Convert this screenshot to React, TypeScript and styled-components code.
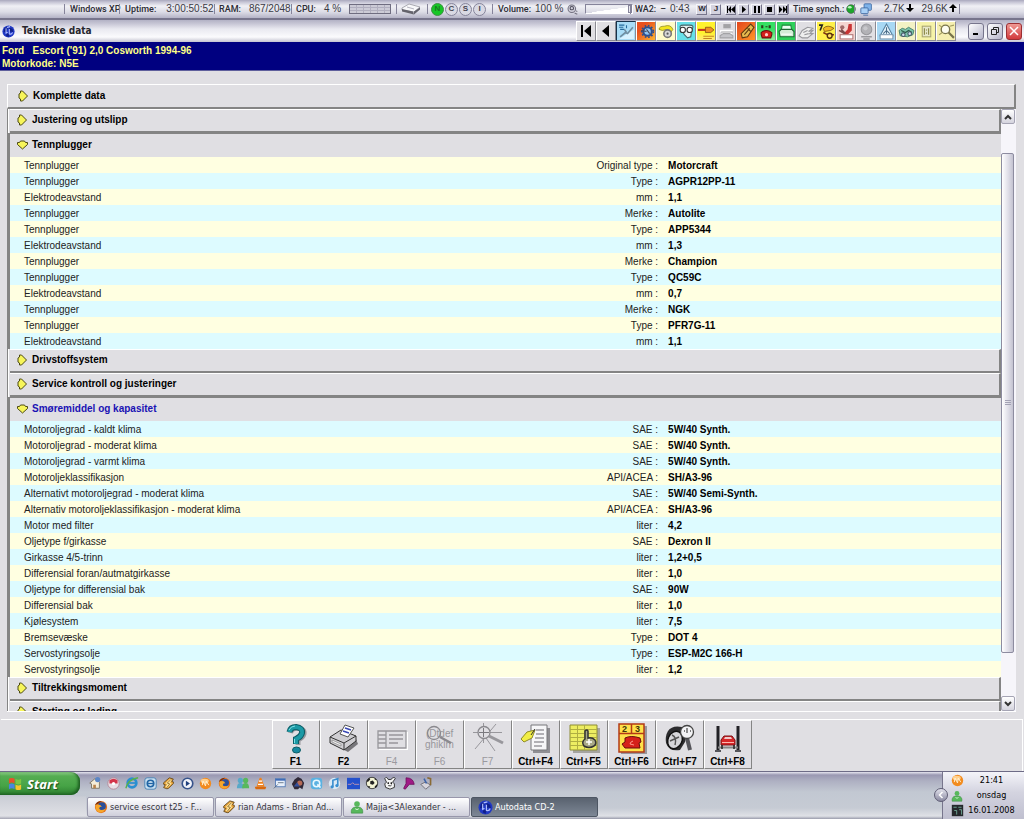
import React, { useState } from "react";
import styled, { createGlobalStyle, css } from "styled-components";

const SANS = '"Liberation Sans", Arial, sans-serif';
const TAHOMA = '"DejaVu Sans Condensed", "DejaVu Sans", sans-serif';
const FACE = "#e0dfe3";
const SHADE = "#848484";

const Global = createGlobalStyle`
  *, *::before, *::after { box-sizing: border-box; }
  html, body, #root { height: 100%; }
  body { margin: 0; background: ${FACE}; font: 10px/16px ${SANS}; color: #000; }
  button { font: inherit; color: inherit; margin: 0; padding: 0; border: 0; background: none; }
  svg { display: block; flex: none; }
`;

const Desktop = styled.div`
  display: flex;
  flex-direction: column;
  height: 100vh;
  min-height: 400px;
  overflow: hidden;
`;

/* ---------- system monitor strip ---------- */

const Monitor = styled.div`
  flex: none;
  display: grid;
  grid-template-columns: 55px 95px 77px 105px 31px 65px 138px 158px 66px 105px 1fr;
  align-items: center;
  height: 20px;
  padding-left: 64px;
  background: linear-gradient(#a9a8bd 0, #c5c4d4 2px, #f0f0f5 6px, #dcdce6 12px, #b4b3c6 18px);
  border-bottom: 2px solid #77758c;
  font: 500 9px/12px Roboto, sans-serif;
  white-space: nowrap;
`;

const Gauge = styled.div<{ $gap?: number; $pad?: number }>`
  display: flex;
  align-items: center;
  justify-content: flex-start;
  gap: ${(p) => p.$gap ?? 0}px;
  height: 10px;
  padding-left: ${(p) => p.$pad ?? 5}px;
  border-left: 1px solid #85839a;
  color: #2c2c34;
`;

const Digits = styled.span`
  font: 10px/12px ${SANS};
  color: #3a3a44;
`;

const Dot = styled.span<{ $on?: boolean }>`
  display: grid;
  place-items: center;
  width: 13px;
  height: 13px;
  border: 1px solid ${(p) => (p.$on ? "#3f8f46" : "#85839a")};
  border-radius: 50%;
  background: ${(p) => (p.$on ? "#17c626" : "#d9d9e3")};
  font: bold 8px/8px ${SANS};
  color: ${(p) => (p.$on ? "#1a7a22" : "#44434f")};
`;

const Volume = styled.input`
  appearance: none;
  width: 48px;
  height: 10px;
  margin: 0 0 0 3px;
  border: 1px solid #85839a;
  border-right-color: #fff;
  border-bottom-color: #fff;
  background: linear-gradient(172deg, transparent 50%, #fff 52%) 6px 1px / 36px 7px no-repeat;
  &::-webkit-slider-thumb {
    appearance: none;
    width: 4px;
    height: 8px;
    background: #e8e8ee;
    border: 1px solid #85839a;
  }
`;

const Tiny = styled.button`
  display: grid;
  place-items: center;
  width: 11px;
  height: 11px;
  border: 1px solid #f6f6fa;
  border-right-color: #77758c;
  border-bottom-color: #77758c;
  background: #d4d3df;
  font: bold 8px/8px ${SANS};
`;

const TinyGroup = styled.span<{ $gap: number; $left: number }>`
  display: flex;
  gap: ${(p) => p.$gap}px;
  margin-left: ${(p) => p.$left}px;
`;

/* ---------- window caption ---------- */

const Caption = styled.header`
  flex: none;
  display: flex;
  align-items: center;
  height: 22px;
  padding: 0 2px;
  background: linear-gradient(#b3b2c5 0, #c3c2d2 3px, #e9e9f0 9px, #fbfbfd 17px, #c4c3d0 22px);
`;

const Title = styled.h1`
  flex: 1;
  margin: 0;
  padding-left: 7px;
  font: bold 10px/20px "DejaVu Sans Condensed", sans-serif;
  color: #26262e;
`;

const IconStrip = styled.div`
  display: flex;
  height: 20px;
  background: #fff;
`;

const StripButton = styled.button<{ $bg?: string; $pressed?: boolean }>`
  display: grid;
  place-items: center;
  width: 20px;
  height: 20px;
  border: 1px solid ${(p) => (p.$pressed ? "#17324a" : "#fff")};
  border-right-color: #8a8a92;
  border-bottom-color: #8a8a92;
  background: ${(p) => p.$bg ?? FACE};
`;

const WindowButtons = styled.div`
  display: flex;
  gap: 3px;
  margin-left: 12px;
`;

const WindowButton = styled.button<{ $close?: boolean }>`
  display: grid;
  place-items: center;
  width: 16px;
  height: 17px;
  border: 1px solid ${(p) => (p.$close ? "#9c2f33" : "#77758c")};
  border-radius: 3px;
  background: ${(p) =>
    p.$close ? "linear-gradient(#f09a94, #d23a3c)" : "linear-gradient(135deg, #fff, #b5b4c9)"};
`;

const Vehicle = styled.div`
  flex: none;
  height: 29px;
  padding: 2px;
  background: #000080;
  border-bottom: 1px solid #5f5f9c;
  color: #ffff86;
  font: bold 10px/13px ${SANS};
  white-space: pre;
`;

/* ---------- content ---------- */

const Content = styled.main`
  flex: 1;
  min-height: 0;
  display: flex;
  flex-direction: column;
  margin: 13px 8px 0 7px;
  border-bottom: 1px solid #fff;
`;

const headerLook = css`
  display: flex;
  align-items: center;
  gap: 4px;
  width: 100%;
  font: bold 10px/20px ${SANS};
  text-align: left;
`;

const AllData = styled.button`
  ${headerLook}
  flex: none;
  height: 25px;
  padding-left: 9px;
  border: 1px solid #fff;
  border-right: 2px solid ${SHADE};
  border-bottom: 2px solid ${SHADE};
`;

const Scroller = styled.div`
  flex: 1;
  min-height: 0;
  display: flex;
  border-left: 1px solid ${SHADE};
`;

const Sections = styled.div`
  flex: 1;
  min-width: 0;
  overflow-y: auto;
  scrollbar-width: none;
`;

const Section = styled.section<{ $open: boolean }>`
  border-left: ${(p) => (p.$open ? `2px solid ${SHADE}` : "1px solid #fff")};
  padding-left: ${(p) => (p.$open ? 0 : 1)}px;
`;

const SectionHeader = styled.button<{ $open: boolean; $current?: boolean }>`
  ${headerLook}
  height: 24px;
  padding: 0 0 2px 6px;
  color: ${(p) => (p.$current ? "#1a12b4" : "#000")};
  border-top: 1px solid ${(p) => (p.$open ? SHADE : "#fff")};
  border-right: ${(p) => (p.$open ? 0 : 2)}px solid ${SHADE};
  border-bottom: ${(p) => (p.$open ? 0 : 2)}px solid ${SHADE};
`;

const Sheet = styled.table`
  width: 100%;
  table-layout: fixed;
  border-collapse: collapse;
  border-spacing: 0;
`;

const Row = styled.tr<{ $tint: boolean }>`
  height: 16px;
  background: ${(p) => (p.$tint ? "#ddfbff" : "#ffffe1")};
`;

const Name = styled.th`
  width: 54%;
  padding: 2px 0 0 14px;
  font-weight: normal;
  text-align: left;
  line-height: 14px;
  color: #222;
`;

const Unit = styled.td`
  padding: 2px 1px 0 0;
  text-align: right;
  line-height: 14px;
  color: #222;
`;

const Value = styled.td`
  width: 34.5%;
  padding: 2px 0 0 9px;
  font-weight: bold;
  line-height: 14px;
`;

const ScrollBar = styled.div`
  flex: none;
  display: flex;
  flex-direction: column;
  width: 15px;
  background: #f6f5fa;
`;

const ScrollButton = styled.button`
  display: grid;
  place-items: center;
  flex: none;
  width: 14px;
  height: 15px;
  border: 1px solid #a5a4b4;
  border-radius: 2px;
  background: linear-gradient(#fff, #d5d4de);
`;

const Track = styled.div`
  flex: 1;
  display: grid;
  grid-template-rows: 29fr 501fr 43fr;
`;

const Thumb = styled.div`
  grid-row: 2;
  display: grid;
  place-items: center;
  width: 13px;
  border: 1px solid #8d8ca0;
  border-radius: 2px;
  background: linear-gradient(90deg, #fff, #dddce6 60%, #c3c2d0);
`;

/* ---------- function keys ---------- */

const KeyBar = styled.div`
  flex: none;
  display: flex;
  justify-content: center;
  height: 52px;
  margin: 7px 1px 0 1px;
  border-top: 1px solid #fff;
  border-right: 1px solid #fff;
`;

const KeyButton = styled.button`
  display: flex;
  flex-direction: column;
  align-items: center;
  gap: 1px;
  width: 48px;
  height: 49px;
  padding-top: 2px;
  border: 1px solid #fff;
  border-right-color: ${SHADE};
  border-bottom-color: ${SHADE};
  font: bold 10px/12px ${SANS};
  &:disabled {
    color: #9a999e;
    font-weight: normal;
  }
`;

/* ---------- task bar ---------- */

const TaskBar = styled.footer`
  flex: none;
  display: grid;
  grid-template-columns: 86px 1fr 82px;
  height: 48px;
  border-top: 1px solid #6d6b86;
  background: linear-gradient(#e6e5f0 0, #9a98b2 3px, #aeb0c2 9px, #c2c8d2 20px, #c6cbd4 36px, #dfe1e6 44px, #9a9cac 47px);
`;

const StartCell = styled.div`
  background: linear-gradient(transparent 24px, #cbced6 25px, #e0e1e6 44px, #a2a3b2 47px);
`;

const Start = styled.button`
  display: flex;
  align-items: center;
  gap: 4px;
  width: 80px;
  height: 23px;
  padding-left: 8px;
  border-radius: 0 9px 9px 0;
  background: linear-gradient(#8fce88 0, #55ad52 4px, #46a346 14px, #2c7d2e 23px);
  box-shadow: inset -2px -1px 3px #1c5c20;
  color: #fff;
  font: italic bold 13px/20px "Open Sans", sans-serif;
  text-shadow: 1px 1px 1px #1c4f1e;
`;

const TaskColumn = styled.div`
  display: flex;
  flex-direction: column;
  gap: 3px;
`;

const QuickLaunch = styled.nav`
  display: grid;
  grid-template-columns: repeat(19, 1fr);
  width: 350px;
  height: 22px;
`;

const Quick = styled.button`
  display: grid;
  place-items: center;
`;

const Tasks = styled.div`
  display: flex;
  gap: 1px;
  padding-left: 1px;
`;

const Task = styled.button<{ $active?: boolean }>`
  display: flex;
  align-items: center;
  gap: 2px;
  flex: 0 1 127px;
  height: 20px;
  padding-left: 6px;
  border: 1px solid ${(p) => (p.$active ? "#4d5663" : "#9897ab")};
  border-radius: 2px;
  background: ${(p) =>
    p.$active ? "linear-gradient(#59626f, #7d8795)" : "linear-gradient(#fff 0, #e9e9ef 8px, #cfcfdb 18px)"};
  color: ${(p) => (p.$active ? "#fff" : "#33333b")};
  font: 9px/14px ${TAHOMA};
  white-space: nowrap;
`;

const Tray = styled.div`
  position: relative;
  display: grid;
  grid-template-columns: 14px 1fr;
  grid-auto-rows: 15px;
  align-items: center;
  column-gap: 2px;
  padding: 1px 8px 0 8px;
  border-left: 1px solid #77758c;
  background: linear-gradient(#f4f4f9, #d4d4e0 20px, #c0c0d0 46px);
  font: 9px/15px ${TAHOMA};
  text-align: center;
`;

const TrayToggle = styled.button`
  position: absolute;
  left: -9px;
  top: 16px;
  display: grid;
  place-items: center;
  width: 14px;
  height: 14px;
  border: 1px solid #5f5d75;
  border-radius: 50%;
  background: linear-gradient(#e2e2ec, #8b8aa2);
`;

/* ---------- drawings ---------- */

const Art = ({ s = 16, w, h, box = 16, children }: any) => (
  <svg width={w ?? s} height={h ?? s} viewBox={`0 0 ${w && h ? `${w} ${h}` : `${box} ${box}`}`} aria-hidden="true">
    {children}
  </svg>
);

const Arrow = ({ open }: { open: boolean }) => (
  <Art w={12} h={12}>
    <path
      d={open ? "M3.5 3.5L4.500 2h4l1 1.500h2v2L6.500 10 1.500 5.500v-2z" : "M3.500 3V1h2L10.500 6 5.500 11h-2V9L2 8V4z"}
      fill="#f7f55a"
      stroke="#4c4a12"
    />
  </Art>
);

const Autodata = ({ s = 14 }) => (
  <Art s={s}>
    <circle cx="8" cy="8" r="7.500" fill="#2038c4" />
    <path d="M3 4l3-2 1 3-2 3-3 1zM9 3l4 2 1 4-3-1-2 1zM6 10l3 1-1 4-3-2z" fill="#10208a" />
    <path d="M5 4v6l2-1M9 5v6q3 1 4-2M6 3l4-1" stroke="#aebcff" fill="none" strokeWidth="1.300" />
  </Art>
);

const Firefox = ({ s = 13 }) => (
  <Art s={s}>
    <circle cx="8" cy="8" r="7" fill="#e5741b" />
    <circle cx="9" cy="7" r="4.500" fill="#2b4f9a" />
    <path d="M2 4q1 2 3 1 3 0 4 3-3-1-3 2 2 3 7 0-2 5-7 4Q1 13 2 4z" fill="#f7a72b" />
    <path d="M1 6Q3 1 9 1l-4 3z" fill="#7a2d0c" />
  </Art>
);

const Winamp = ({ s = 13 }) => (
  <Art s={s}>
    <path d="M9 1L2 7v2l2 .5L2 13l4 1.500L8 14l6-6V6l-2-.5L14 2.500z" fill="#e8a33a" stroke="#5c4217" />
    <path d="M10 2.500L4 8l2.500 1L4 12.500l3 .5 5-5-2-1 2-3.500z" fill="#fbe6a1" />
    <path d="M11 3L6.500 7.500l3 1L6 13" fill="none" stroke="#8c6420" />
  </Art>
);

const Buddy = ({ s = 13, c = "#58b85c" }) => (
  <Art s={s}>
    <circle cx="8" cy="4.500" r="3.200" fill={c} />
    <path d="M1.500 15q-1-6 4.500-7h4q5.500 1 4.500 7z" fill={c} stroke="#34803c" strokeWidth=".6" />
    <path d="M6 10q2 2 4 0" stroke="#e8ffe8" fill="none" />
  </Art>
);

const Ball = ({ s = 13 }) => (
  <Art s={s}>
    <circle cx="8" cy="8" r="7" fill="#f28b1e" />
    <ellipse cx="7" cy="5" rx="5" ry="3" fill="#ffcf8c" />
    <path d="M4 10l1-5 3 6 1-6 3 5" stroke="#fff0d0" fill="none" strokeWidth="1.200" />
  </Art>
);

const Drive = () => (
  <Art w={20} h={12}>
    <path d="M1 5L8 1l11 3-6 5L1 7z" fill="#f8f8fa" stroke="#8a8994" strokeWidth=".7" />
    <path d="M1 6l11 2.500 1 3L1 8.500zM13 8.500l6-4v2l-6 5z" fill="#64636c" />
    <path d="M6 4l7 2" stroke="#b5b4be" />
  </Art>
);

const Meter = () => (
  <Art w={42} h={10}>
    <rect x=".5" y=".5" width="41" height="9" fill="#cccbd6" stroke="#6f6d80" />
    <path d="M1 3.500h40M1 6.500h40M7.500 1v8M14.500 1v8M21.500 1v8M28.500 1v8M35.500 1v8" stroke="#b1afbf" />
  </Art>
);

const Speaker = () => (
  <Art s={11}>
    <circle cx="7" cy="7" r="5.500" fill="#d0cfdb" stroke="#72707f" strokeWidth="1.500" />
    <circle cx="7" cy="6" r="2.500" fill="none" stroke="#4e4c5a" strokeWidth="1.500" />
    <path d="M11 13l4 2M13 10l2 1" stroke="#72707f" strokeWidth="1.500" />
  </Art>
);

const media: Record<string, string> = {
  Previous: "M0 0h1v7H0zM4 0v7L1 3.500zM8 0v7L4 3.500z",
  Play: "M2 0l4 3.500L2 7z",
  Pause: "M1 0h2v7H1zM5 0h2v7H5z",
  Stop: "M1 1h5v5H1z",
  Next: "M0 0l3.500 3.500L0 7zM4 0l3.500 3.500L4 7zM7 0h1v7H7z",
};

const stripIcons: { name: string; bg: string; art: React.ReactNode }[] = [
  {
    name: "Tekniske data",
    bg: "#a9dcf6",
    art: (
      <>
        <path d="M1 15L15 6v9z" fill="#d9f2ff" />
        <path d="M1 2h5M1 4h4M2 6h4M8 2v3" stroke="#256a9c" />
        <path d="M2 13l5-4 2 1 5-6M8 9l-2-3" stroke="#6f8da0" fill="none" strokeWidth="1.500" />
      </>
    ),
  },
  {
    name: "Motorstyring",
    bg: "linear-gradient(135deg,#e8501e 30%,#ffb62e)",
    art: (
      <>
        <circle cx="9" cy="8" r="4" fill="#8fc3f0" stroke="#2c4f8d" strokeWidth="2" />
        <circle cx="9" cy="8" r="5.500" fill="none" stroke="#2c4f8d" strokeWidth="1.500" strokeDasharray="1.500 1.700" />
        <path d="M3 7l5 1M8 6l3 4" stroke="#445" />
      </>
    ),
  },
  {
    name: "Registerrem",
    bg: "#fffbc8",
    art: (
      <>
        <path d="M1 6q0-3 5-3 6-2 8 3l-2 3-3-3-5 1z" fill="#f2e51d" stroke="#8a831e" strokeWidth=".7" />
        <circle cx="9" cy="10" r="3.500" fill="#d8d8d8" stroke="#777" strokeWidth="1.500" />
        <circle cx="9" cy="10" r="1" fill="#555" />
      </>
    ),
  },
  {
    name: "Diagnose",
    bg: "#66e0e8",
    art: (
      <>
        <path d="M3 6q-3-4 2-4h6q5 0 2 4l-1 7-3 1-3-3z" fill="#e8f4f4" stroke="#47666a" />
        <circle cx="4.500" cy="6.500" r="2.500" fill="#fff" stroke="#333" />
        <circle cx="11" cy="6.500" r="2.500" fill="#fff" stroke="#333" />
      </>
    ),
  },
  {
    name: "Reparasjonstider",
    bg: "linear-gradient(#fff22e 60%,#ffe97a)",
    art: (
      <>
        <path d="M0 6.500h7" stroke="#c8361f" strokeWidth="2" />
        <path d="M7 4h5l3 2.500L12 9H7z" fill="#f09024" stroke="#7e4a10" strokeWidth=".7" />
        <path d="M5 12.500h10M5 14.500h8" stroke="#c58324" />
      </>
    ),
  },
  {
    name: "Luftkondisjonering",
    bg: FACE,
    art: (
      <>
        <rect x="5" y="1" width="7" height="4" fill="#a3a3a6" />
        <path d="M2 7.500h12M4 9.500h9" stroke="#fff" strokeWidth="2" />
        <path d="M3 8.500h11M2 12l3-2h6l3 2v2H2z" stroke="#a3a3a6" fill="#c4c4c8" />
      </>
    ),
  },
  {
    name: "Service",
    bg: "linear-gradient(135deg,#e3461e,#ff9726)",
    art: (
      <>
        <path d="M12 1l3 3-6 9-5 1-1-4z" fill="#e6b94e" stroke="#5e3a12" />
        <path d="M11 5L6 11M9 5l3 3" stroke="#5e3a12" />
      </>
    ),
  },
  {
    name: "Feilkoder",
    bg: "linear-gradient(#35e063 40%,#8ff09c)",
    art: (
      <>
        <path d="M4 2v3M11 2v3M8 3v1" stroke="#2c3a1a" strokeWidth="2" />
        <path d="M3 9q5-4 10 0v2l-1 3H4l-1-3z" fill="#d3201c" stroke="#6c1010" />
        <circle cx="8" cy="11" r="1.500" fill="#ffd0c8" />
      </>
    ),
  },
  {
    name: "Utskrift",
    bg: "#2fd15b",
    art: (
      <>
        <path d="M4 2h8l1 5H3z" fill="#eafff0" stroke="#1e8a3c" />
        <path d="M1 8l2-2h10l2 2v5H2z" fill="#d2ecd6" stroke="#1e6a34" />
        <path d="M3 10.500h10" stroke="#fff" />
      </>
    ),
  },
  {
    name: "Koblingsskjema",
    bg: FACE,
    art: (
      <>
        <path d="M1 12l3-5 5-3 5 1-4 3 4-1-3 3 3 0-5 4H4z" fill="#eee" stroke="#98989c" />
        <path d="M5 9l4-2M6 11l4-1" stroke="#98989c" />
      </>
    ),
  },
  {
    name: "Nøkkelprogrammering",
    bg: "#fff04a",
    art: (
      <>
        <path d="M1 2h3l-2 5" stroke="#222" fill="none" strokeWidth="1.500" />
        <path d="M5 5q4-4 10 0l-3 2-6 1z" fill="#f2b822" stroke="#6f4b0d" strokeWidth=".7" />
        <path d="M5 9l4 2h6" stroke="#7c3414" strokeWidth="1.500" fill="none" />
        <circle cx="11" cy="12" r="2.300" fill="#ffdf5d" stroke="#58340e" strokeWidth="1.300" />
      </>
    ),
  },
  {
    name: "Airbag",
    bg: "#f4d4d0",
    art: (
      <>
        <path d="M10 1h3v6l-4 4-4-1 4-4z" fill="#c93434" />
        <circle cx="4" cy="4" r="2" fill="#a06a6a" />
        <path d="M1 7l5 3M3 6l4 4" stroke="#7a4a4a" strokeWidth="1.500" />
        <rect x="2" y="11" width="12" height="4" fill="#fff" stroke="#b07474" />
      </>
    ),
  },
  {
    name: "Dekktrykk",
    bg: FACE,
    art: (
      <>
        <circle cx="8" cy="6" r="5" fill="#b2b2b6" stroke="#98989c" />
        <circle cx="7" cy="5" r="2" fill="#c8c8cc" />
        <path d="M3 13h10M5 15h6" stroke="#99999d" strokeWidth="1.500" />
      </>
    ),
  },
  {
    name: "Hjulinnstilling",
    bg: "#a8d8f4",
    art: (
      <>
        <path d="M8 1L2 12h12z" fill="#e6f4fc" stroke="#5480a0" />
        <path d="M8 4v6M5 10l3-3 3 3" stroke="#4a6c88" fill="none" />
        <rect x="2" y="11" width="12" height="4" fill="#fff" stroke="#7a98b0" />
      </>
    ),
  },
  {
    name: "Kjøretøy",
    bg: "#f3f2c4",
    art: (
      <>
        <path d="M1 7l3-2 3 1 3-2 5 3-1 4-5 2-7-1z" fill="#7cc4aa" stroke="#3d7664" strokeWidth=".8" />
        <path d="M3 7l4 2 3-2 3 2" fill="none" stroke="#2d5a4a" />
        <circle cx="5" cy="11" r="1.700" fill="#cde" stroke="#456" />
        <circle cx="11" cy="10" r="1.700" fill="#cde" stroke="#456" />
      </>
    ),
  },
  {
    name: "Sikringer",
    bg: "#f6f3a8",
    art: (
      <>
        <rect x="4" y="3" width="8" height="10" fill="#e6e6c8" stroke="#a9a670" />
        <path d="M6 5v6M10 5v6M8 6v1M8 9v1" stroke="#84813e" />
      </>
    ),
  },
  {
    name: "Søk",
    bg: "#f5efb0",
    art: (
      <>
        <circle cx="7" cy="6" r="4" fill="#fdfdf0" stroke="#77734a" strokeWidth="1.300" />
        <path d="M10 9l5 5" stroke="#77734a" strokeWidth="2" />
        <path d="M1 11l3-2M11 3l4-1M1 2l3 2" stroke="#a59f60" />
      </>
    ),
  },
];

const keys: { label: string; off?: boolean; art: React.ReactNode }[] = [
  {
    label: "F1",
    art: (
      <>
        <path d="M10.500 10q1-5 7.500-5 7 1 6 6-1 4-6 6v5" fill="none" stroke="#9c9ca0" strokeWidth="5" />
        <path d="M9.500 9q1-5 6.500-5 7 1 6 6-1 4-6 6v5" fill="none" stroke="#0d5d66" strokeWidth="6" />
        <path d="M9.500 9q1-5 6.500-5 7 1 6 6-1 4-6 6v5" fill="none" stroke="#1c9aa6" strokeWidth="4" />
        <path d="M9 7q2-4 6-4M14.500 16v4" fill="none" stroke="#7fe0e6" />
        <ellipse cx="16.500" cy="27" rx="4" ry="3" fill="#1689a0" stroke="#0d5d66" />
      </>
    ),
  },
  {
    label: "F2",
    art: (
      <>
        <path d="M5 21l15 8 10-8-2-5-12 3z" fill="#77767a" />
        <path d="M2 14l11-7 15 6v5l-12 9L2 20z" fill="#cfced2" stroke="#333" />
        <path d="M2 14l14 6 12-7M16 20v7" fill="none" stroke="#333" />
        <path d="M12 11l5-9 9 3-6 9z" fill="#fff" stroke="#555" />
        <path d="M17 5l6 2M15 8l6 2" stroke="#3746b4" strokeWidth="1.500" />
        <path d="M4 17l9 4v2l-9-4z" fill="#f4f4f4" stroke="#777" strokeWidth=".6" />
      </>
    ),
  },
  {
    label: "F4",
    off: true,
    art: (
      <>
        <path d="M3 26h28V9" fill="none" stroke="#fff" strokeWidth="2" />
        <path d="M2 8h28v17H2zM10 8v17M2 12h8M2 16h8M2 20h8" fill="none" stroke="#98979c" strokeWidth="1.300" />
        <path d="M13 12h14M13 16h14M13 20h9" stroke="#98979c" strokeWidth="1.500" />
      </>
    ),
  },
  {
    label: "F6",
    off: true,
    art: (
      <>
        <text x="2" y="14" fontSize="10" fill="#98979c" fontFamily="Liberation Sans, sans-serif">(Dtdef</text>
        <text x="1" y="25" fontSize="10" fill="#98979c" fontFamily="Liberation Sans, sans-serif">ghiklm</text>
        <circle cx="10" cy="10" r="6.500" fill="none" stroke="#8a898e" strokeWidth="1.300" />
        <path d="M16 14l11 6" stroke="#8a898e" strokeWidth="2.500" />
      </>
    ),
  },
  {
    label: "F7",
    off: true,
    art: (
      <>
        <path d="M1 9.500h29M11.500 0v20M3 26L24 1M14 15l9 13" stroke="#98979c" />
        <circle cx="12" cy="9.500" r="6" fill={FACE} stroke="#8a898e" strokeWidth="1.300" />
        <path d="M11.500 5v9M7 9.500h10" stroke="#7a797e" />
        <path d="M17 13l14 7" stroke="#98979c" strokeWidth="3" />
      </>
    ),
  },
  {
    label: "Ctrl+F4",
    art: (
      <>
        <path d="M13 5h17v25H13z" fill="#8f8e93" />
        <path d="M11 2h16v25H11z" fill="#f6f6f8" stroke="#77767a" />
        <path d="M16 7h8M16 11h8M15 15h9M14 19h10M14 23h8" stroke="#9a999e" strokeWidth="1.500" />
        <path d="M1 16l6-7 8-2-3 8-8 4z" fill="#f1ee45" stroke="#8f8b26" />
        <path d="M11 12l4-6" stroke="#333" />
      </>
    ),
  },
  {
    label: "Ctrl+F5",
    art: (
      <>
        <path d="M5 5h27v25H5z" fill="#a5a4a0" />
        <path d="M2 2h27v25H2z" fill="#eded62" stroke="#8c8b35" />
        <path d="M2 6.500h27M2 10.500h27M2 14.500h27M2 18.500h27M2 22.500h27M9.500 2v25M16.500 2v25" stroke="#b0ae42" />
        <path d="M17 8q2-2 3 0v7q4-1 7 2 2 4-1 6-5 3-10 0-3-4 1-7z" fill="#a9a987" stroke="#333" strokeWidth="1.500" />
        <path d="M21 16v6M18 19h6" stroke="#fff" strokeWidth="1.500" />
      </>
    ),
  },
  {
    label: "Ctrl+F6",
    art: (
      <>
        <path d="M5 3h26v28H5z" fill="#98979c" />
        <path d="M3 1h25v28H3z" fill="#ffe14a" stroke="#b33a16" strokeWidth="1.500" />
        <path d="M15.500 1v10M3 10.500h25" stroke="#b33a16" strokeWidth="1.500" />
        <text x="6" y="9" fontSize="9" fill="#40350a" fontFamily="Liberation Sans, sans-serif">2</text>
        <text x="19" y="9" fontSize="9" fill="#40350a" fontFamily="Liberation Sans, sans-serif">3</text>
        <path d="M9 15q6-3 15 0l1 4-2 1 1 5H9l-3-4 3-2z" fill="#d5211a" stroke="#6a0c0c" />
        <path d="M17 18q-3 1-3 3l4 1" fill="none" stroke="#ff9a8c" />
      </>
    ),
  },
  {
    label: "Ctrl+F7",
    art: (
      <>
        <path d="M4 8Q8 2 18 4q7 4 3 15l-5 8Q5 29 2 20q-1-7 2-12z" fill="#2c2c2e" />
        <ellipse cx="11" cy="17" rx="7" ry="9" transform="rotate(25 11 17)" fill="#d6d6da" stroke="#111" strokeWidth="1.500" />
        <path d="M8 12q5 2 3 10M6 18l9-4" stroke="#555" fill="none" strokeWidth="1.500" />
        <path d="M23 15l3 12" stroke="#55555a" strokeWidth="4" />
        <circle cx="23" cy="9" r="6.500" fill="#f3f3f5" stroke="#444" strokeWidth="1.300" />
        <path d="M23 5v5M20 8h1M26 8h1" stroke="#555" strokeWidth="1.300" />
      </>
    ),
  },
  {
    label: "Ctrl+F8",
    art: (
      <>
        <path d="M6 3v24M26 3v24" stroke="#222226" strokeWidth="3" />
        <path d="M3 28h6M23 28h6" stroke="#55555a" strokeWidth="2" />
        <path d="M9 17l3-4h8l3 4v5H9z" fill="#d7282a" stroke="#7c1114" />
        <path d="M12 16l1-2h6l1 2z" fill="#f0c8c8" />
        <path d="M10 19.500h12" stroke="#ffb8b0" />
        <path d="M6 24.500h20" stroke="#888" strokeWidth="2" />
        <path d="M10 22v4M22 22v4" stroke="#222" strokeWidth="1.500" />
      </>
    ),
  },
];

const quick: { name: string; art: React.ReactNode }[] = [
  { name: "Skrivebord", art: <Art s={14}><path d="M2 8l6-5 5 4v7H4V9z" fill="#f4ecd8" stroke="#77705e" /><circle cx="11" cy="4" r="3" fill="#5b86c6" /><path d="M6 14v-4h3v4" fill="#b9824a" /></Art> },
  { name: "Nero", art: <Art s={13}><circle cx="8" cy="8" r="7" fill="#e8e0e6" stroke="#b08090" /><path d="M3 4q5-4 10 0v4H3z" fill="#d3344a" /><circle cx="8" cy="8" r="2" fill="#fff" /></Art> },
  { name: "Internet Explorer", art: <Art s={14}><circle cx="8" cy="8" r="5" fill="none" stroke="#2a8fd0" strokeWidth="3" /><path d="M3 8h10" stroke="#2a8fd0" strokeWidth="2" /><path d="M1 14Q3 4 15 2" fill="none" stroke="#57b04a" strokeWidth="1.500" /></Art> },
  { name: "Outlook Express", art: <Art s={13}><rect x="1" y="1" width="14" height="14" rx="3" fill="#c7dff0" stroke="#3978ae" /><circle cx="8" cy="8" r="4" fill="none" stroke="#2064a4" strokeWidth="2" /><path d="M5 8h6" stroke="#2064a4" strokeWidth="1.500" /></Art> },
  { name: "Winamp", art: <Winamp /> },
  { name: "Media", art: <Art s={13}><circle cx="8" cy="8" r="6.500" fill="#f2f4fa" stroke="#38548c" strokeWidth="2" /><path d="M6 4.500l5 3.500-5 3.500z" fill="#20407e" /></Art> },
  { name: "Last.fm", art: <Ball /> },
  { name: "Firefox", art: <Firefox /> },
  { name: "Messenger", art: <Art s={14}><circle cx="5" cy="5" r="3" fill="#58a8c8" /><circle cx="11" cy="5" r="3" fill="#58b85c" /><path d="M1 14q0-6 4-6t4 6z" fill="#58a8c8" /><path d="M7 14q0-6 4-6t4 6z" fill="#58b85c" /></Art> },
  { name: "VLC", art: <Art s={13}><path d="M7 1h2l4 11H3z" fill="#f0821e" /><path d="M6 5h4M5 9h6" stroke="#fff" strokeWidth="1.500" /><path d="M1 12h14l-1 3H2z" fill="#d8690f" /></Art> },
  { name: "Dokumenter", art: <Art s={13}><rect x="3" y="2" width="12" height="10" fill="#e8f0fb" stroke="#4a74b2" /><path d="M3 3.500h12" stroke="#3a68b6" strokeWidth="2" /><path d="M6 7h7M1 14l5-5" stroke="#55667a" /></Art> },
  { name: "Spill", art: <Art s={14}><path d="M1 9l3-5 4-3 4 2 3 5-2 7-3-2-2 2H4z" fill="#302838" /><circle cx="10" cy="8" r="3" fill="#b56a56" /><path d="M3 12l4-5 3 5z" fill="#34509c" /></Art> },
  { name: "Quicktime", art: <Art s={13}><rect x="1" y="1" width="14" height="14" rx="4" fill="#5ab2e2" /><circle cx="8" cy="8" r="4" fill="none" stroke="#e8f8ff" strokeWidth="2" /><path d="M9 9l4 4" stroke="#e8f8ff" strokeWidth="2" /></Art> },
  { name: "iTunes", art: <Art s={13}><circle cx="8" cy="8" r="7" fill="#dbeaf6" /><path d="M6 12V4l6-2v8" fill="none" stroke="#3a8ed0" strokeWidth="2" /><circle cx="5" cy="12" r="2" fill="#3a8ed0" /><circle cx="11" cy="10.500" r="2" fill="#3a8ed0" /></Art> },
  { name: "Graf", art: <Art s={13}><path d="M0 1h16v14H0z" fill="#2450cc" /><path d="M1 9h4l2-2 2 2h6" stroke="#d49aa8" fill="none" /></Art> },
  { name: "Fotball", art: <Art s={14}><circle cx="8" cy="8" r="6.500" fill="#f5f5d6" stroke="#333" /><path d="M6 6l3-1 2 3-2 2-3-1zM2 5l3-3 1 2-3 3zM11 12l3-3v3l-2 2zM3 11l3 1-1 2zM11 2l3 3-3-1z" fill="#222" /></Art> },
  { name: "Figur", art: <Art s={14}><path d="M2 3q2-3 4 1l3 0q4-4 5-1l-3 4 2 2v4l-5 2-5-2-1-4 2-2z" fill="#f4f4f4" stroke="#222" /><circle cx="6" cy="8" r="1" /><circle cx="9.500" cy="8" r="1" /><path d="M6 11q3 1 4-1" fill="none" stroke="#222" /></Art> },
  { name: "Pil", art: <Art s={13}><path d="M5 1q9 0 10 8H9l-5 6-2-1 3-6z" fill="#a01a86" stroke="#6c0e5a" /></Art> },
  { name: "Verktøy", art: <Art s={13}><path d="M1 9l6-3 6 4-6 5z" fill="#d6d4dc" stroke="#66646e" /><path d="M9 1l4 1v8" stroke="#8a6a34" fill="none" strokeWidth="2" /><path d="M5 2l3 6" stroke="#3b62a8" strokeWidth="2" /></Art> },
];

/* ---------- data ---------- */

type Line = [string, string, string];
type Block = { title: string; current?: boolean; tintFirst?: boolean; lines?: Line[] };

const blocks: Block[] = [
  { title: "Justering og utslipp" },
  {
    title: "Tennplugger",
    lines: [
      ["Tennplugger", "Original type", "Motorcraft"],
      ["Tennplugger", "Type", "AGPR12PP-11"],
      ["Elektrodeavstand", "mm", "1,1"],
      ["Tennplugger", "Merke", "Autolite"],
      ["Tennplugger", "Type", "APP5344"],
      ["Elektrodeavstand", "mm", "1,3"],
      ["Tennplugger", "Merke", "Champion"],
      ["Tennplugger", "Type", "QC59C"],
      ["Elektrodeavstand", "mm", "0,7"],
      ["Tennplugger", "Merke", "NGK"],
      ["Tennplugger", "Type", "PFR7G-11"],
      ["Elektrodeavstand", "mm", "1,1"],
    ],
  },
  { title: "Drivstoffsystem" },
  { title: "Service kontroll og justeringer" },
  {
    title: "Smøremiddel og kapasitet",
    current: true,
    tintFirst: true,
    lines: [
      ["Motoroljegrad - kaldt klima", "SAE", "5W/40 Synth."],
      ["Motoroljegrad - moderat klima", "SAE", "5W/40 Synth."],
      ["Motoroljegrad - varmt klima", "SAE", "5W/40 Synth."],
      ["Motoroljeklassifikasjon", "API/ACEA", "SH/A3-96"],
      ["Alternativt motoroljegrad - moderat klima", "SAE", "5W/40 Semi-Synth."],
      ["Alternativ motoroljeklassifikasjon - moderat klima", "API/ACEA", "SH/A3-96"],
      ["Motor med filter", "liter", "4,2"],
      ["Oljetype f/girkasse", "SAE", "Dexron II"],
      ["Girkasse 4/5-trinn", "liter", "1,2+0,5"],
      ["Differensial foran/autmatgirkasse", "liter", "1,0"],
      ["Oljetype for differensial bak", "SAE", "90W"],
      ["Differensial bak", "liter", "1,0"],
      ["Kjølesystem", "liter", "7,5"],
      ["Bremsevæske", "Type", "DOT 4"],
      ["Servostyringsolje", "Type", "ESP-M2C 166-H"],
      ["Servostyringsolje", "liter", "1,2"],
    ],
  },
  { title: "Tiltrekkingsmoment" },
  { title: "Starting og lading" },
];

export default function App() {
  const [volume, setVolume] = useState(100);
  return (
    <Desktop>
      <Global />
      <Monitor>
        <Gauge>Windows XP</Gauge>
        <Gauge $gap={10}>Uptime: <Digits>3:00:50:52</Digits></Gauge>
        <Gauge $gap={8} $pad={4}>RAM: <Digits>867/2048</Digits></Gauge>
        <Gauge $gap={8} $pad={4}>CPU: <Digits>4 %</Digits><Meter /></Gauge>
        <Gauge $pad={4}><Drive /></Gauge>
        <Gauge $gap={1} $pad={3}>
          <Dot $on>N</Dot><Dot>C</Dot><Dot>S</Dot><Dot>I</Dot>
        </Gauge>
        <Gauge $gap={4}>
          Volume: <Digits>100 %</Digits><Speaker />
          <Volume type="range" aria-label="Volume" value={volume} onChange={(e) => setVolume(+e.target.value)} />
        </Gauge>
        <Gauge $gap={4} $pad={4}>
          WA2: <span>–</span> <Digits>0:43</Digits>
          <TinyGroup $gap={3} $left={3}><Tiny>W</Tiny><Tiny>J</Tiny></TinyGroup>
          <TinyGroup $gap={2} $left={0}>
            {Object.entries(media).map(([name, d]) => (
              <Tiny key={name} aria-label={name}><Art w={8} h={7}><path d={d} /></Art></Tiny>
            ))}
          </TinyGroup>
        </Gauge>
        <Gauge $gap={2} $pad={4}>
          Time synch.:
          <Art s={10}><circle cx="8" cy="8" r="7" fill="#1da62c" stroke="#4a5a4c" /><ellipse cx="6" cy="5" rx="3" ry="2" fill="#b8f5bc" /></Art>
        </Gauge>
        <Gauge $gap={8}>
          <Art s={13}><rect x="5" y="1" width="9" height="8" rx="1" fill="#7fb3ea" stroke="#3a659f" /><rect x="1" y="6" width="9" height="7" rx="1" fill="#a9d0f6" stroke="#3a659f" /><path d="M4 15h6" stroke="#3a659f" /></Art>
          <TinyGroup $gap={1} $left={3}><Digits>2.7K</Digits><Art w={8} h={10}><path d="M4 9L0 5h3V1h2v4h3z" /></Art></TinyGroup>
          <TinyGroup $gap={1} $left={0}><Digits>29.6K</Digits><Art w={8} h={10}><path d="M4 1L0 5h3v4h2V5h3z" /></Art></TinyGroup>
        </Gauge>
        <Gauge />
      </Monitor>

      <Caption>
        <Autodata s={13} />
        <Title>Tekniske data</Title>
        <IconStrip>
          <StripButton aria-label="Første"><Art w={14} h={14}><path d="M2 1h2v12H2zM12 1v12L5 7z" /></Art></StripButton>
          <StripButton aria-label="Forrige"><Art w={14} h={14}><path d="M10 1v12L3 7z" /></Art></StripButton>
          {stripIcons.map((i, n) => (
            <StripButton key={i.name} $bg={i.bg} $pressed={n === 0} aria-label={i.name}>
              <Art s={17}>{i.art}</Art>
            </StripButton>
          ))}
        </IconStrip>
        <WindowButtons>
          <WindowButton aria-label="Minimer"><Art w={10} h={10}><path d="M2 7h5v2H2z" /></Art></WindowButton>
          <WindowButton aria-label="Gjenopprett">
            <Art w={10} h={10}><path d="M3.500 3V1.500h5v5H7M1.500 3.500h5v5h-5z" fill="none" stroke="#222" /></Art>
          </WindowButton>
          <WindowButton $close aria-label="Lukk">
            <Art w={10} h={10}><path d="M1 1l8 8M9 1l-8 8" stroke="#fff" strokeWidth="1.500" /></Art>
          </WindowButton>
        </WindowButtons>
      </Caption>

      <Vehicle>
        <div>{"Ford   Escort ('91) 2,0 Cosworth 1994-96"}</div>
        <div>Motorkode: N5E</div>
      </Vehicle>

      <Content>
        <AllData><Arrow open={false} />Komplette data</AllData>
        <Scroller>
          <Sections>
            {blocks.map((b) => (
              <Section key={b.title} $open={!!b.lines}>
                <SectionHeader $open={!!b.lines} $current={b.current} aria-expanded={!!b.lines}>
                  <Arrow open={!!b.lines} />{b.title}
                </SectionHeader>
                {b.lines && (
                  <Sheet>
                    <tbody>
                      {b.lines.map(([name, unit, value], i) => (
                        <Row key={i} $tint={(i % 2 === 1) !== !!b.tintFirst}>
                          <Name scope="row">{name}</Name>
                          <Unit>{unit} :</Unit>
                          <Value>{value}</Value>
                        </Row>
                      ))}
                    </tbody>
                  </Sheet>
                )}
              </Section>
            ))}
          </Sections>
          <ScrollBar>
            <ScrollButton aria-label="Rull opp"><Art w={8} h={6}><path d="M1 5l3-3 3 3" fill="none" stroke="#333" strokeWidth="2" /></Art></ScrollButton>
            <Track>
              <Thumb><Art w={6} h={6}><path d="M0 .5h6M0 2.500h6M0 4.500h6" stroke="#a3a2b4" /></Art></Thumb>
            </Track>
            <ScrollButton aria-label="Rull ned"><Art w={8} h={6}><path d="M1 1l3 3 3-3" fill="none" stroke="#333" strokeWidth="2" /></Art></ScrollButton>
          </ScrollBar>
        </Scroller>
      </Content>

      <KeyBar>
        {keys.map((k) => (
          <KeyButton key={k.label} disabled={k.off}>
            <Art s={32} box={32}>{k.art}</Art>
            {k.label}
          </KeyButton>
        ))}
      </KeyBar>

      <TaskBar>
        <StartCell>
          <Start>
            <Art s={15}>
              <path d="M1 3q3-2 6 0v5q-3-2-6 0z" fill="#e8502a" />
              <path d="M8 3q3 2 6 0v5q-3 2-6 0z" fill="#7cc644" />
              <path d="M1 9q3-2 6 0v5q-3-2-6 0z" fill="#4a86e0" />
              <path d="M8 9q3 2 6 0v5q-3 2-6 0z" fill="#f5c52c" />
            </Art>
            Start
          </Start>
        </StartCell>
        <TaskColumn>
          <QuickLaunch>
            {quick.map((q) => <Quick key={q.name} aria-label={q.name}>{q.art}</Quick>)}
          </QuickLaunch>
          <Tasks>
            <Task><Firefox s={14} />service escort t25 - F...</Task>
            <Task><Winamp s={14} />rian Adams - Brian Ad...</Task>
            <Task><Buddy s={14} />Majja&lt;3Alexander - ...</Task>
            <Task $active><Autodata s={15} />Autodata CD-2</Task>
          </Tasks>
        </TaskColumn>
        <Tray>
          <TrayToggle aria-label="Vis skjulte ikoner"><Art w={8} h={8}><path d="M5.500 1l-3 3 3 3" fill="none" stroke="#fff" strokeWidth="1.500" /></Art></TrayToggle>
          <Ball /><span>21:41</span>
          <Buddy s={12} /><span>onsdag</span>
          <Art s={13}><path d="M1 1h14v14H1z" fill="#25282c" /><path d="M3 4h4M9 4h4M4 8h3v5M10 7h3v6" stroke="#7ab8a4" fill="none" /></Art>
          <span>16.01.2008</span>
        </Tray>
      </TaskBar>
    </Desktop>
  );
}
